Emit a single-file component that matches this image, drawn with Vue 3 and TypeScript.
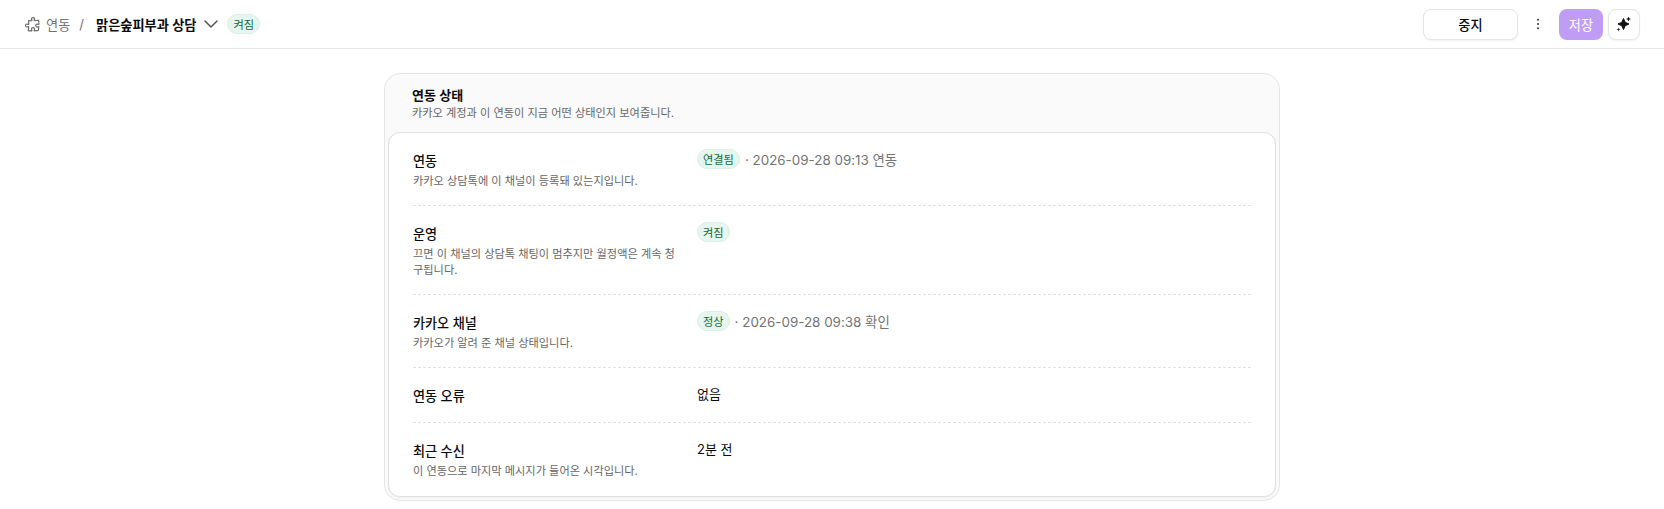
<script setup lang="ts">
interface Row {
  label: string;
  desc?: string;
  badge?: string;
  meta?: string;
  value?: string;
}
const rows: Row[] = [
  { label: '연동', desc: '카카오 상담톡에 이 채널이 등록돼 있는지입니다.', badge: '연결됨', meta: '· 2026-09-28 09:13 연동' },
  { label: '운영', desc: '끄면 이 채널의 상담톡 채팅이 멈추지만 월정액은 계속 청구됩니다.', badge: '켜짐' },
  { label: '카카오 채널', desc: '카카오가 알려 준 채널 상태입니다.', badge: '정상', meta: '· 2026-09-28 09:38 확인' },
  { label: '연동 오류', value: '없음' },
  { label: '최근 수신', desc: '이 연동으로 마지막 메시지가 들어온 시각입니다.', value: '2분 전' },
];
</script>

<template>
  <div class="page">
    <header class="topbar">
      <nav class="crumbs">
        <svg class="puzzle" width="17" height="17" viewBox="0 0 24 24" fill="none" stroke="currentColor" stroke-width="1.600" stroke-linejoin="round" stroke-linecap="round">
          <path d="M14.250 6.087c0-.355.186-.676.401-.959.221-.290.349-.634.349-1.003 0-1.036-1.007-1.875-2.250-1.875s-2.250.840-2.250 1.875c0 .369.128.713.349 1.003.215.283.401.604.401.959a.640.640 0 0 1-.657.643 48.390 48.390 0 0 1-4.163-.300c.186 1.613.293 3.250.315 4.907a.656.656 0 0 1-.658.663c-.355 0-.676-.186-.959-.401a1.647 1.647 0 0 0-1.003-.349c-1.036 0-1.875 1.007-1.875 2.250s.840 2.250 1.875 2.250c.369 0 .713-.128 1.003-.349.283-.215.604-.401.959-.401.310 0 .555.260.532.570a48.039 48.039 0 0 1-.642 5.056c1.518.190 3.058.309 4.616.354a.640.640 0 0 0 .657-.643c0-.355-.186-.676-.401-.959a1.647 1.647 0 0 1-.349-1.003c0-1.035 1.008-1.875 2.250-1.875 1.243 0 2.250.840 2.250 1.875 0 .369-.128.713-.349 1.003-.215.283-.400.604-.400.959 0 .333.277.599.610.580a48.100 48.100 0 0 0 5.427-.630 48.050 48.050 0 0 0 .582-4.717.532.532 0 0 0-.533-.570c-.355 0-.676.186-.959.401-.290.221-.634.349-1.003.349-1.035 0-1.875-1.007-1.875-2.250s.840-2.250 1.875-2.250c.370 0 .713.128 1.003.349.283.215.604.401.960.401a.656.656 0 0 0 .658-.663 48.422 48.422 0 0 0-.370-5.360c-1.886.342-3.810.574-5.766.689a.578.578 0 0 1-.610-.580z" />
        </svg>
        <span class="crumb-parent">연동</span>
        <span class="slash">/</span>
        <strong class="crumb-current">맑은숲피부과 상담</strong>
        <svg class="chev" width="24" height="24" viewBox="0 0 24 24" fill="none" stroke="currentColor" stroke-width="1.500" stroke-linecap="round" stroke-linejoin="round"><path d="m6 9 6 6 6-6" /></svg>
        <span class="badge top-badge">켜짐</span>
      </nav>
      <div class="actions">
        <button class="btn stop" type="button">중지</button>
        <button class="more" type="button" aria-label="더보기">
          <svg width="16" height="16" viewBox="0 0 16 16" fill="currentColor"><circle cx="8" cy="3.800" r="1" /><circle cx="8" cy="8" r="1" /><circle cx="8" cy="12.200" r="1" /></svg>
        </button>
        <button class="btn save" type="button">저장</button>
        <button class="btn magic" type="button" aria-label="AI">
          <svg width="18" height="18" viewBox="0 0 18 18" fill="currentColor">
            <path d="M8.500 3.500 10.200 7.300 14 9l-3.800 1.700L8.500 14.500 6.800 10.700 3 9l3.800-1.700z" stroke="currentColor" stroke-width="1" stroke-linejoin="round" />
            <path d="M13.500 1.500l.7 1.800 1.800.7-1.800.7-.7 1.800-.7-1.800-1.800-.7 1.800-.7z" />
            <path d="M3.500 12.500l.5 1.500 1.500.5-1.500.5-.5 1.500-.5-1.500-1.500-.5 1.500-.5z" />
          </svg>
        </button>
      </div>
    </header>

    <main class="content">
      <section class="panel">
        <div class="panel-head">
          <h2>연동 상태</h2>
          <p>카카오 계정과 이 연동이 지금 어떤 상태인지 보여줍니다.</p>
        </div>
        <div class="panel-body">
          <div v-for="row in rows" :key="row.label" class="row">
            <div class="row-label">
              <h3>{{ row.label }}</h3>
              <p v-if="row.desc">{{ row.desc }}</p>
            </div>
            <div class="row-value">
              <span v-if="row.badge" class="badge">{{ row.badge }}</span>
              <span v-if="row.meta" class="meta">{{ row.meta }}</span>
              <span v-if="row.value" class="value">{{ row.value }}</span>
            </div>
          </div>
        </div>
      </section>
    </main>
  </div>
</template>

<style>
html, body { margin: 0; background: #fff; }
</style>

<style scoped>
.page {
  width: 1664px;
  height: 509px;
  overflow: hidden;
  font-family: Inter, "Noto Sans CJK KR", sans-serif;
  color: #0a0a0a;
  background: #fff;
}
.topbar {
  height: 49px;
  box-sizing: border-box;
  border-bottom: 1px solid #e5e5e5;
  display: flex;
  align-items: center;
  justify-content: space-between;
  padding: 0 24px;
}
.crumbs { display: flex; align-items: center; font-size: 13.200px; }
.puzzle { color: #666; }
.crumb-parent { color: #737373; margin-left: 5px; }
.slash { color: #737373; margin: 0 12px 0 9px; }
.crumb-current { font-weight: 600; }
.chev { color: #555; margin-left: 3px; }
.badge {
  display: inline-flex;
  align-items: center;
  box-sizing: border-box;
  height: 20px;
  padding: 0 5px;
  border-radius: 10px;
  background: #e6f5ee;
  color: #14683f;
  font-size: 11.200px;
  font-weight: 400;
  border: 1px solid #dcf0e6;
}
.top-badge { margin-left: 4px; }
.actions { display: flex; align-items: center; }
.btn {
  font-family: inherit;
  font-size: 13.200px;
  border-radius: 8px;
  box-sizing: border-box;
  height: 31px;
  padding: 0;
}
.stop {
  width: 95px;
  background: #fff;
  border: 1px solid #e5e5e5;
  color: #0a0a0a;
  font-weight: 500;
  box-shadow: 0 1px 2px rgba(0, 0, 0, .05);
}
.more {
  width: 16px;
  height: 16px;
  margin: 0 13px 0 12px;
  padding: 0;
  border: 0;
  background: none;
  color: #333;
  display: flex;
}
.save {
  width: 44px;
  background: #c09df5;
  border: 0;
  color: #fff;
  font-weight: 400;
}
.magic {
  width: 32px;
  margin-left: 5px;
  background: #fff;
  border: 1px solid #e5e5e5;
  color: #111;
  display: flex;
  align-items: center;
  justify-content: center;
  box-shadow: 0 1px 2px rgba(0, 0, 0, .05);
}
.content { display: flex; justify-content: center; padding-top: 24px; }
.panel {
  width: 896px;
  box-sizing: border-box;
  height: 428px;
  background: #fafafa;
  border: 1px solid #e5e5e5;
  border-radius: 16px;
  padding: 0 3px 3px;
}
.panel-head { height: 58px; padding: 11px 24px 0; box-sizing: border-box; }
.panel-head h2 { margin: 0; font-size: 13px; line-height: 20px; font-weight: 600; }
.panel-head p { margin: 0; font-size: 11.200px; line-height: 16px; color: #666; }
.panel-body {
  background: #fff;
  border: 1px solid #e0e0e0;
  border-radius: 12px;
  padding: 0 24px;
  height: 365px;
  box-sizing: border-box;
  box-shadow: 0 1px 2px rgba(0, 0, 0, .05);
}
.row {
  display: grid;
  grid-template-columns: 268px 1fr;
  column-gap: 16px;
  padding: 16px 0 15px;
  border-bottom: 1px dashed #e0e0e0;
}
.row:last-child { border-bottom: 0; }
.row-label h3 { margin: 1px 0 0; font-size: 13.100px; line-height: 22px; font-weight: 500; }
.row-label p { margin: 1px 0 0; padding-bottom: 1px; font-size: 11.200px; line-height: 16px; color: #666; word-break: break-all; }
.row-value { display: flex; align-items: center; align-self: start; min-height: 20px; font-size: 13px; }
.meta { color: #737373; margin-left: 5px; font-size: 13.400px; }
.value { color: #0a0a0a; margin-top: -2px; }
</style>
